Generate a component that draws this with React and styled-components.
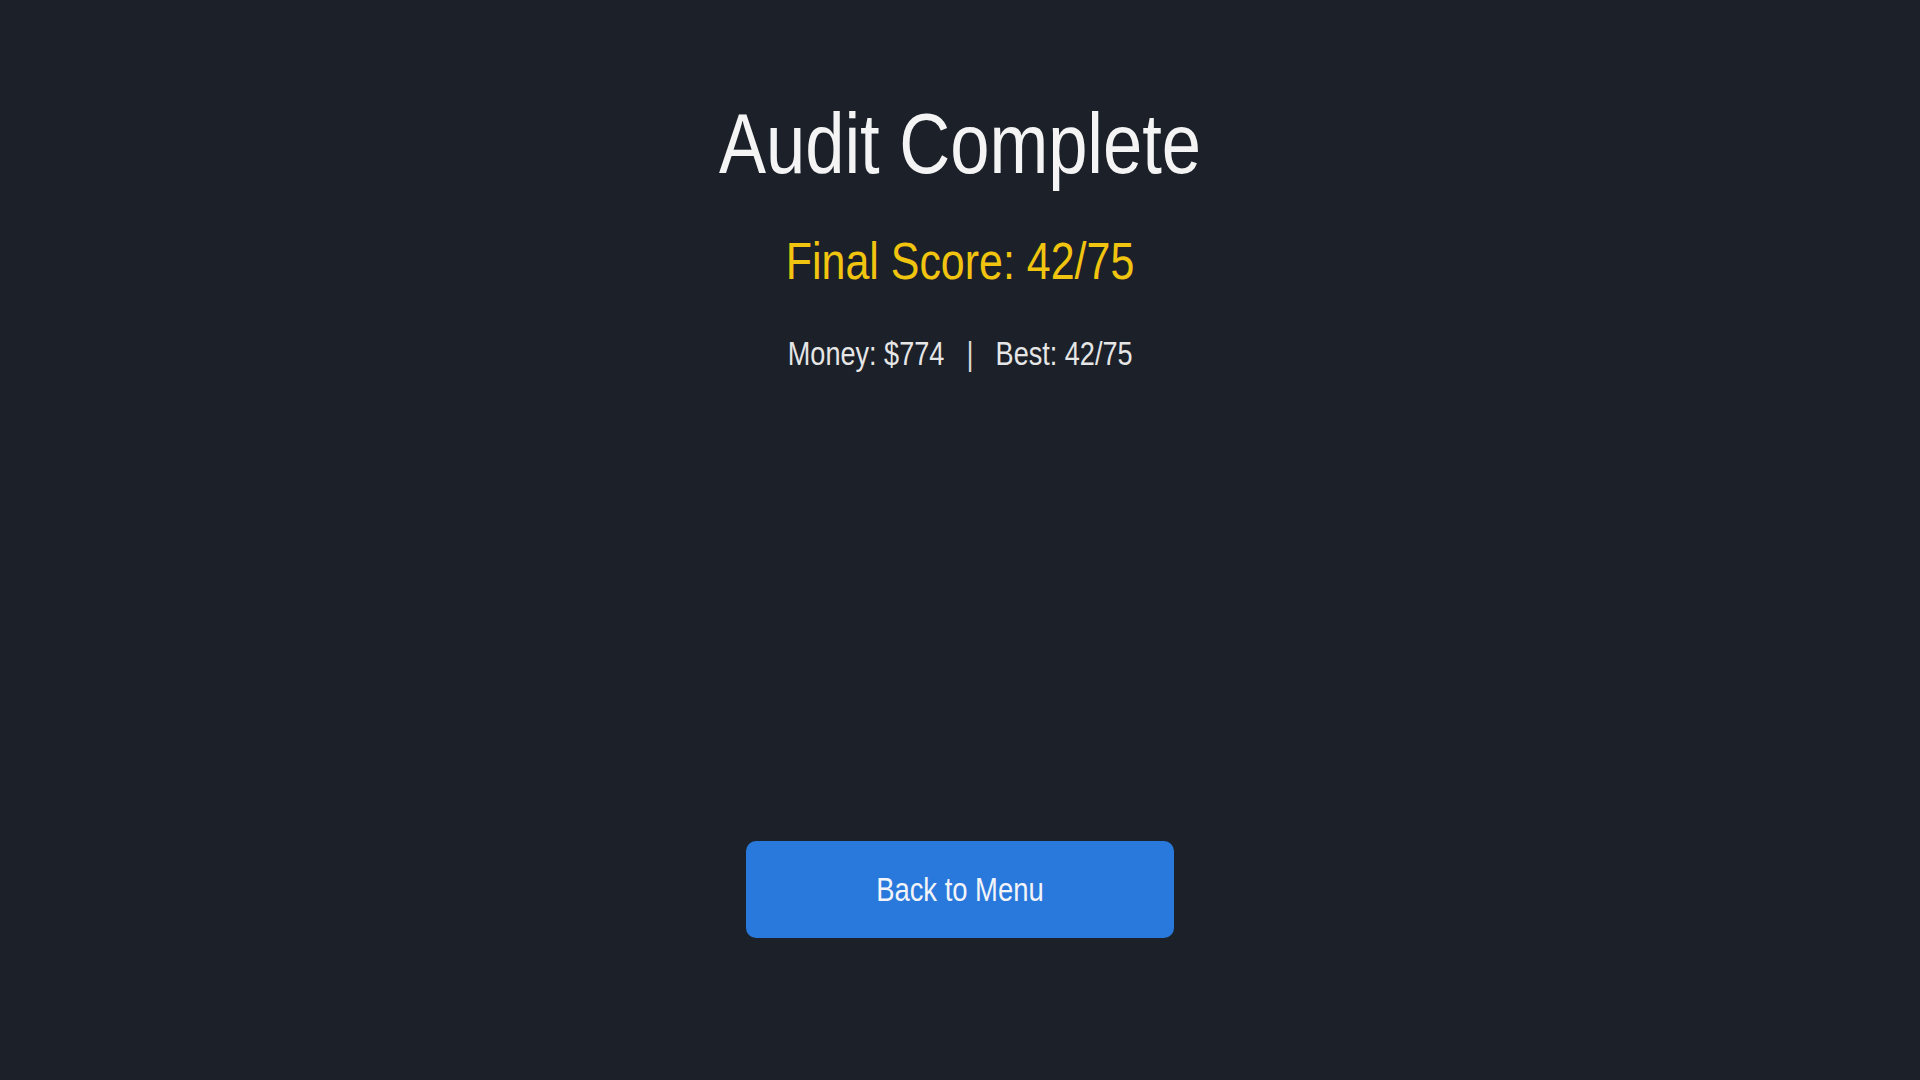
import React from "react";
import styled, { createGlobalStyle } from "styled-components";

const GlobalStyle = createGlobalStyle`
  html, body {
    margin: 0;
    padding: 0;
    background: #1b2029;
  }
  * { box-sizing: border-box; }
`;

const Screen = styled.main`
  min-height: 100vh;
  background: #1b2029;
  display: flex;
  flex-direction: column;
  align-items: center;
  padding-top: 100px;
  font-family: "Liberation Sans", Arial, sans-serif;
`;

const Title = styled.h1`
  margin: 0;
  font-size: 86px;
  line-height: 1;
  font-weight: 400;
  color: #f4f4f4;
  transform: scaleX(0.82);
`;

const Score = styled.h2`
  margin: 49px 0 0;
  font-size: 52px;
  line-height: 1;
  font-weight: 400;
  color: #f1c40f;
  transform: scaleX(0.826);
`;

const Stats = styled.div`
  margin-top: 50px;
  display: flex;
  align-items: baseline;
  gap: 27px;
  font-size: 33px;
  line-height: 1;
  color: #e6e6e6;
  transform: scaleX(0.82);
`;

const Separator = styled.span`
  color: #d8d8d8;
`;

const MenuButton = styled.button`
  margin-top: 471px;
  width: 428px;
  height: 97px;
  border: none;
  border-radius: 10px;
  background: #2979dd;
  color: #f2f4f8;
  font-family: inherit;
  font-size: 33px;
  cursor: pointer;
`;

const ButtonLabel = styled.span`
  display: inline-block;
  transform: scaleX(0.83);
`;

export default function App() {
  return (
    <>
      <GlobalStyle />
      <Screen>
        <Title>Audit Complete</Title>
        <Score>Final Score: 42/75</Score>
        <Stats>
          <span>Money: $774</span>
          <Separator>|</Separator>
          <span>Best: 42/75</span>
        </Stats>
        <MenuButton>
          <ButtonLabel>Back to Menu</ButtonLabel>
        </MenuButton>
      </Screen>
    </>
  );
}
